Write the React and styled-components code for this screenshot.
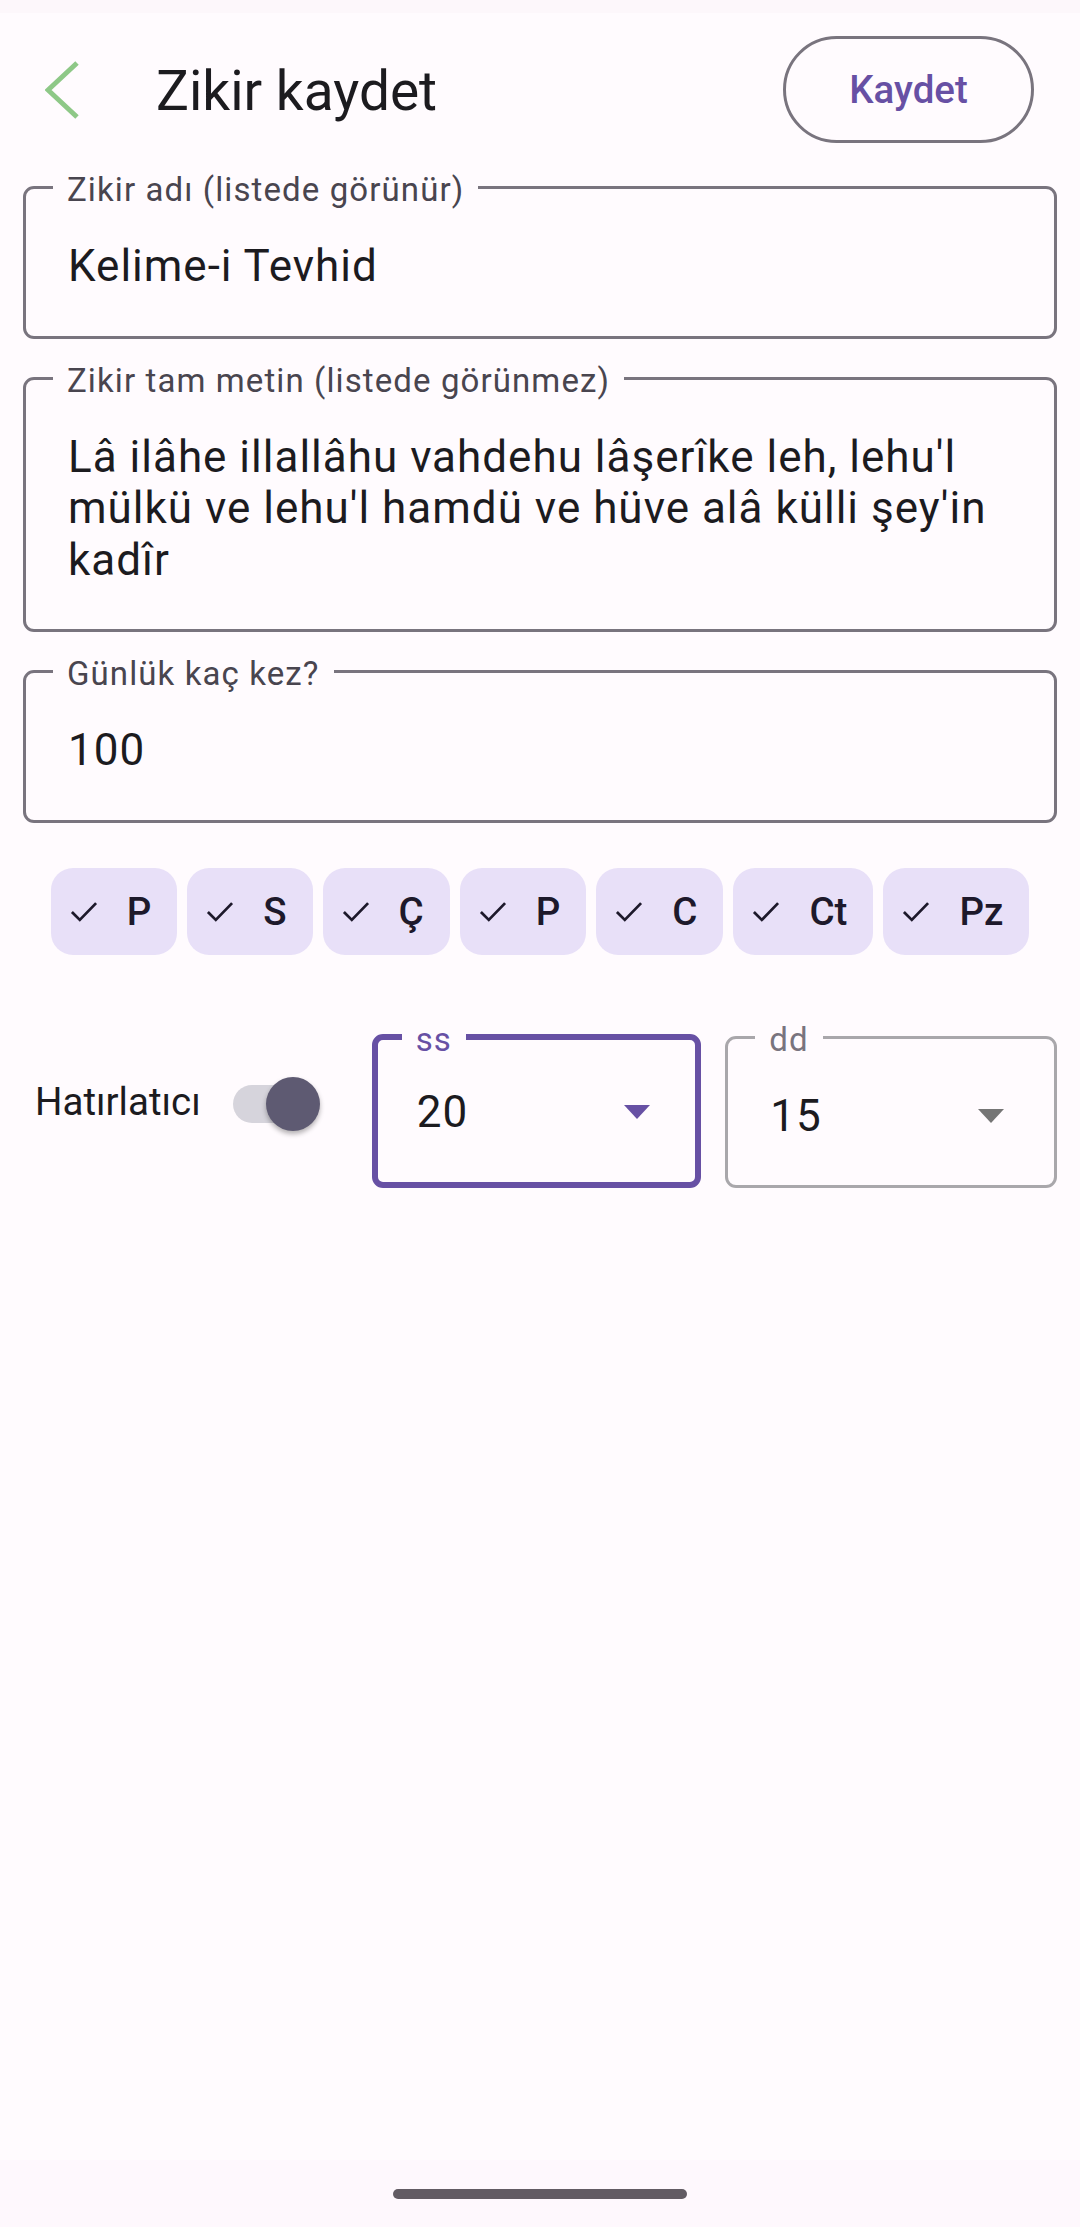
import styled, { createGlobalStyle } from "styled-components";

const GlobalStyle = createGlobalStyle`
  html, body {
    margin: 0;
    padding: 0;
    background: #fffbfe;
  }
  * {
    box-sizing: border-box;
  }
`;

const Screen = styled.div`
  width: 1080px;
  min-height: 2227px;
  display: flex;
  flex-direction: column;
  background: #fffbfe;
  font-family: Roboto, "Noto Sans", sans-serif;
  color: #1c1b1f;
`;

const StatusStrip = styled.div`
  height: 13px;
  background: #fdf7fb;
`;

const Main = styled.main`
  flex: 1;
  display: flex;
  flex-direction: column;
  padding: 0 23px;
`;

const Header = styled.header`
  height: 107px;
  margin-top: 23px;
  display: flex;
  align-items: center;
  padding: 0 23px 0 22px;
`;

const BackButton = styled.button`
  border: 0;
  background: none;
  padding: 0;
  width: 34px;
  height: 58px;
  display: flex;
  align-items: center;
  cursor: pointer;
`;

const Title = styled.h1`
  margin: 4px 0 0 77px;
  flex: 1;
  font-size: 55px;
  font-weight: 400;
  color: #1c1b1f;
  line-height: 1;
`;

const SaveButton = styled.button`
  width: 251px;
  height: 107px;
  border: 3px solid #79747e;
  border-radius: 54px;
  background: transparent;
  color: #6750a4;
  font-family: Roboto, sans-serif;
  font-size: 38.5px;
  font-weight: 500;
  cursor: pointer;
`;

const Form = styled.section`
  display: flex;
  flex-direction: column;
  gap: 18px;
  margin-top: 23px;
`;

const Field = styled.fieldset`
  margin: 0;
  min-width: 0;
  border: ${({ $focused, $muted }) =>
    $focused ? "6px solid #6750a4" : `3px solid ${$muted ? "#a9a7ab" : "#79747e"}`};
  border-radius: 11px;
  padding: ${({ $focused }) => ($focused ? "28px 37px 40px 39px" : "32px 42px 43px 42px")};
  flex: ${({ $grow }) => ($grow ? "1" : "none")};
`;

const Legend = styled.legend`
  margin-left: -15px;
  padding: 5px 14px 0;
  font-size: 33px;
  line-height: 38px;
  letter-spacing: 1.1px;
  color: ${({ $color }) => $color || "#49454f"};
`;

const Value = styled.div`
  font-size: 44px;
  line-height: 51.5px;
  letter-spacing: 1px;
  color: #1c1b1f;
`;

const ChipRow = styled.div`
  display: flex;
  justify-content: center;
  gap: 10px;
  margin-top: 45px;
`;

const Chip = styled.button`
  height: 87px;
  display: flex;
  align-items: center;
  gap: 29px;
  padding: 0 26px 0 19px;
  border: 0;
  border-radius: 22px;
  background: #e8e0f8;
  color: #1d192b;
  font-family: Roboto, sans-serif;
  font-size: 38.5px;
  font-weight: 500;
`;

const ReminderRow = styled.div`
  display: flex;
  align-items: center;
  margin-top: 61px;
  padding-left: 12px;
`;

const ReminderLabel = styled.span`
  font-size: 38.5px;
  color: #1c1b1f;
`;

const Switch = styled.div`
  position: relative;
  width: 87px;
  height: 54px;
  margin: 4px 52px 0 32px;
  display: flex;
  align-items: center;
`;

const Track = styled.div`
  width: 82px;
  height: 38px;
  border-radius: 19px;
  background: #d6d4dc;
`;

const Thumb = styled.div`
  position: absolute;
  right: 0;
  top: 0;
  width: 54px;
  height: 54px;
  border-radius: 50%;
  background: #5e5a72;
  box-shadow: 0 3px 5px rgba(0, 0, 0, 0.3);
`;

const SelectFields = styled.div`
  flex: 1;
  display: flex;
  gap: 24px;
`;

const SelectValue = styled.div`
  display: flex;
  align-items: center;
  justify-content: space-between;
  padding-right: 8px;
`;

const Caret = styled.span`
  width: 0;
  height: 0;
  border-left: 13.5px solid transparent;
  border-right: 13.5px solid transparent;
  border-top: 14px solid ${({ $color }) => $color};
`;

const NavBar = styled.div`
  height: 67px;
  background: #fef8fd;
  display: flex;
  align-items: center;
  justify-content: center;
`;

const HomePill = styled.div`
  width: 294px;
  height: 10px;
  border-radius: 5px;
  background: #625b63;
`;

const BackIcon = () => (
  <svg width="34" height="58" viewBox="0 0 34 58" fill="none">
    <polyline points="32,2 3,29 32,56" stroke="#8ec887" strokeWidth="5" />
  </svg>
);

const CheckIcon = () => (
  <svg width="28" height="21" viewBox="0 0 26 20" fill="none">
    <polyline points="1.5,10.5 9,18 24.5,2" stroke="#1d192b" strokeWidth="2.6" />
  </svg>
);

const days = ["P", "S", "Ç", "P", "C", "Ct", "Pz"];

export default function App() {
  return (
    <>
      <GlobalStyle />
      <Screen>
        <StatusStrip />
        <Main>
          <Header>
            <BackButton aria-label="Geri">
              <BackIcon />
            </BackButton>
            <Title>Zikir kaydet</Title>
            <SaveButton>Kaydet</SaveButton>
          </Header>

          <Form>
            <Field>
              <Legend>Zikir adı (listede görünür)</Legend>
              <Value>Kelime-i Tevhid</Value>
            </Field>
            <Field>
              <Legend>Zikir tam metin (listede görünmez)</Legend>
              <Value>
                Lâ ilâhe illallâhu vahdehu lâşerîke leh, lehu'l mülkü ve lehu'l hamdü ve hüve alâ
                külli şey'in kadîr
              </Value>
            </Field>
            <Field>
              <Legend>Günlük kaç kez?</Legend>
              <Value>100</Value>
            </Field>
          </Form>

          <ChipRow>
            {days.map((d, i) => (
              <Chip key={i}>
                <CheckIcon />
                {d}
              </Chip>
            ))}
          </ChipRow>

          <ReminderRow>
            <ReminderLabel>Hatırlatıcı</ReminderLabel>
            <Switch>
              <Track />
              <Thumb />
            </Switch>
            <SelectFields>
              <Field $focused $grow>
                <Legend $color="#6750a4">ss</Legend>
                <SelectValue>
                  <Value>20</Value>
                  <Caret $color="#6750a4" />
                </SelectValue>
              </Field>
              <Field $muted $grow>
                <Legend $color="#79747e">dd</Legend>
                <SelectValue>
                  <Value>15</Value>
                  <Caret $color="#757575" />
                </SelectValue>
              </Field>
            </SelectFields>
          </ReminderRow>
        </Main>
        <NavBar>
          <HomePill />
        </NavBar>
      </Screen>
    </>
  );
}
